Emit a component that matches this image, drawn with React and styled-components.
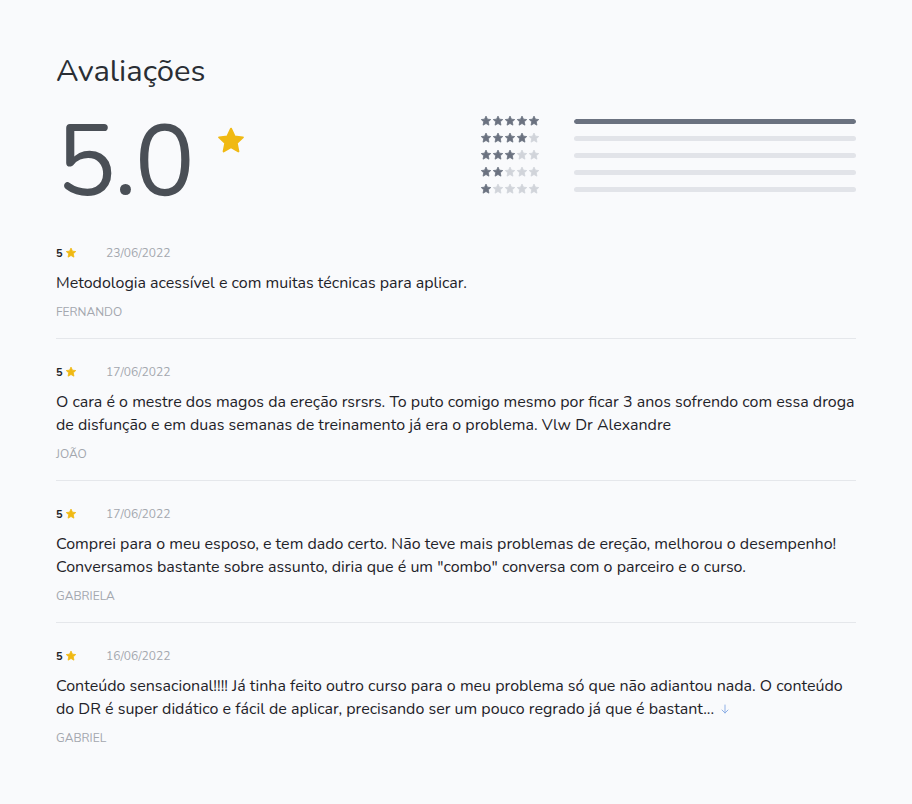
import styled, { createGlobalStyle } from "styled-components"

const reviews = [
  {
    rating: 5,
    date: "23/06/2022",
    text: "Metodologia acessível e com muitas técnicas para aplicar.",
    name: "Fernando"
  },
  {
    rating: 5,
    date: "17/06/2022",
    text: "O cara é o mestre dos magos da ereção rsrsrs. To puto comigo mesmo por ficar 3 anos sofrendo com essa droga de disfunção e em duas semanas de treinamento já era o problema. Vlw Dr Alexandre",
    name: "João"
  },
  {
    rating: 5,
    date: "17/06/2022",
    text: "Comprei para o meu esposo, e tem dado certo. Não teve mais problemas de ereção, melhorou o desempenho! Conversamos bastante sobre assunto, diria que é um \"combo\" conversa com o parceiro e o curso.",
    name: "Gabriela"
  },
  {
    rating: 5,
    date: "16/06/2022",
    text: "Conteúdo sensacional!!!! Já tinha feito outro curso para o meu problema só que não adiantou nada. O conteúdo do DR é super didático e fácil de aplicar, precisando ser um pouco regrado já que é bastant...",
    name: "Gabriel",
    more: true
  }
]

const distribution = [
  { stars: 5, pct: 100 },
  { stars: 4, pct: 0 },
  { stars: 3, pct: 0 },
  { stars: 2, pct: 0 },
  { stars: 1, pct: 0 }
]

const GlobalStyle = createGlobalStyle`
  body {
    margin: 0;
    background: #f9fafc;
    font-family: "Nunito", "Noto Sans", "Open Sans", sans-serif;
    color: #1f2329;
  }
`

const Page = styled.div`
  max-width: 800px;
  margin: 0 auto;
  padding: 50px 0 40px;
`

const Title = styled.h2`
  margin: 0;
  font-size: 31px;
  font-weight: 400;
  line-height: 42px;
  color: #2a2e34;
`

const Summary = styled.div`
  display: flex;
  align-items: flex-start;
  justify-content: space-between;
  margin-top: 20px;
  height: 108px;
`

const Score = styled.div`
  display: flex;
  align-items: flex-start;
`

const BigNumber = styled.span`
  font-size: 100px;
  font-weight: 400;
  line-height: 100px;
  letter-spacing: -2px;
  color: #4a4f56;
`

const BigStar = styled.span`
  margin: 14px 0 0 23px;
  display: flex;
`

const Bars = styled.div`
  width: 376px;
  display: flex;
  flex-direction: column;
  gap: 5px;
  margin-top: 3px;
`

const BarRow = styled.div`
  display: flex;
  align-items: center;
  gap: 34px;
  height: 12px;
`

const StarGroup = styled.div`
  display: flex;
`

const Track = styled.div`
  flex: 1;
  height: 5px;
  border-radius: 3px;
  background: #e2e4e9;
  overflow: hidden;
`

const Fill = styled.div`
  height: 100%;
  background: #6b7280;
  border-radius: 3px;
`

const Review = styled.div`
  padding: 25px 0 18px;
  border-bottom: ${(p) => (p.$last ? "none" : "1px solid #e5e7eb")};
`

const Meta = styled.div`
  display: flex;
  align-items: center;
  height: 16px;
`

const Rating = styled.span`
  display: flex;
  align-items: center;
  gap: 2px;
  font-size: 11px;
  font-weight: 700;
  color: #1f2329;
  width: 50px;
`

const DateText = styled.span`
  font-size: 12px;
  color: #a3a7ae;
`

const Text = styled.p`
  margin: 11px 0 0;
  font-size: 16px;
  line-height: 23px;
  color: #1f2329;
`

const More = styled.svg`
  margin-left: 5px;
  vertical-align: -1px;
`

const Name = styled.div`
  margin-top: 9px;
  font-size: 12px;
  text-transform: uppercase;
  color: #a3a7ae;
`

function Star({ size = 12, color = "#f0b913" }) {
  return (
    <svg width={size} height={size} viewBox="0 0 24 24">
      <path
        d="M12 2.2l2.9 6.1 6.6.8-4.9 4.6 1.3 6.6L12 17l-5.9 3.3 1.3-6.6-4.9-4.6 6.6-.8z"
        fill={color}
        stroke={color}
        strokeWidth="1.6"
        strokeLinejoin="round"
      />
    </svg>
  )
}

function ArrowDown() {
  return (
    <More width="12" height="12" viewBox="0 0 24 24" fill="none" stroke="#8fb0e6" strokeWidth="2" strokeLinecap="round" strokeLinejoin="round">
      <path d="M12 4v16" />
      <path d="M18 14l-6 6-6-6" />
    </More>
  )
}

function App() {
  return (
    <>
      <GlobalStyle />
      <Page>
        <Title>Avaliações</Title>
        <Summary>
          <Score>
            <BigNumber>5.0</BigNumber>
            <BigStar>
              <Star size={30} />
            </BigStar>
          </Score>
          <Bars>
            {distribution.map((d) => (
              <BarRow key={d.stars}>
                <StarGroup>
                  {[1, 2, 3, 4, 5].map((n) => (
                    <Star key={n} size={12} color={n <= d.stars ? "#6b7280" : "#d1d4da"} />
                  ))}
                </StarGroup>
                <Track>
                  <Fill style={{ width: `${d.pct}%` }} />
                </Track>
              </BarRow>
            ))}
          </Bars>
        </Summary>
        <div>
          {reviews.map((r, i) => (
            <Review key={i} $last={i === reviews.length - 1}>
              <Meta>
                <Rating>
                  {r.rating}
                  <Star size={12} />
                </Rating>
                <DateText>{r.date}</DateText>
              </Meta>
              <Text>
                {r.text}
                {r.more && <ArrowDown />}
              </Text>
              <Name>{r.name}</Name>
            </Review>
          ))}
        </div>
      </Page>
    </>
  )
}

export default App
